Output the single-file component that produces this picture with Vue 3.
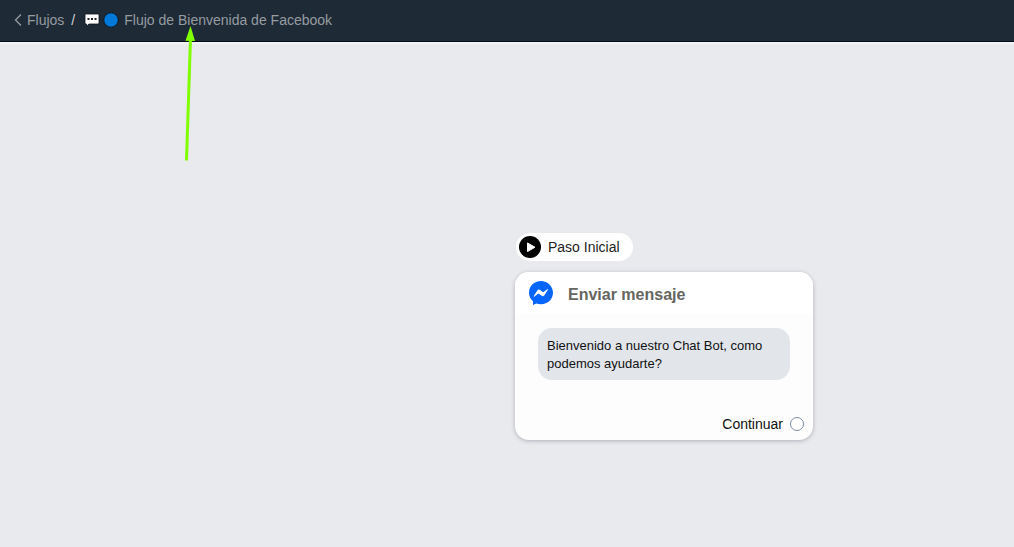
<script setup>
const flowName = 'Flujo de Bienvenida de Facebook'
const step = {
  label: 'Paso Inicial',
  title: 'Enviar mensaje',
  message: 'Bienvenido a nuestro Chat Bot, como podemos ayudarte?',
  next: 'Continuar',
}
</script>

<template>
  <div class="page">
    <header class="topbar">
      <nav class="crumbs" aria-label="Ruta">
        <a class="back" href="#">
          <svg class="chevron" width="8" height="14" viewBox="0 0 8 14" aria-hidden="true">
            <path d="M7 1.500 1.500 7 7 12.500" fill="none" stroke="currentColor" stroke-width="1.300" />
          </svg>
          <span>Flujos</span>
        </a>
        <span class="slash">/</span>
        <svg class="bubble" width="16" height="14" viewBox="0 0 16 14" aria-hidden="true">
          <path d="M2 1h12q1 0 1 1v8q0 1-1 1H5l-2.500 2.200V11H2q-1 0-1-1V2q0-1 1-1z" fill="#fff" stroke="#0c141c" stroke-width=".8" />
          <path d="M3.500 5h2v2h-2zM7 5h2v2H7zM10.500 5h2v2h-2z" fill="#222" />
        </svg>
        <svg class="dot" width="16" height="16" viewBox="0 0 16 16" aria-hidden="true">
          <circle cx="8" cy="8" r="7.200" fill="#0078d7" stroke="#0a131c" stroke-width=".8" />
        </svg>
        <span class="current">{{ flowName }}</span>
      </nav>
    </header>

    <main class="canvas">
      <section class="node">
        <div class="start">
          <svg width="22" height="22" viewBox="0 0 22 22" aria-hidden="true">
            <circle cx="11" cy="11" r="11" fill="#000" />
            <path d="M8.500 7v8.500l7.500-4.250z" fill="#fff" stroke="#fff" stroke-linejoin="round" />
          </svg>
          <span>{{ step.label }}</span>
        </div>
        <article class="card">
          <div class="card-head">
            <svg width="24" height="24" viewBox="0 0 24 24" aria-hidden="true">
              <path d="M12 0C5.200 0 0 5 0 11.700c0 3.500 1.500 6.500 4 8.600V24l3.200-1.600c1.500.5 3.100.8 4.800.8 6.800 0 12-5 12-11.500S18.800 0 12 0z" fill="#0866ff" />
              <path d="M4.800 15.100 8.300 9.500q1.100-1.700 2.800-.5l2.600 2q.4.300.9 0l3.600-2.700q.9-.6.700.4l-3.500 5.600q-1.100 1.700-2.800.5l-2.700-2q-.4-.3-.9 0l-3.500 2.700q-.9.600-.7-.4z" fill="#fff" />
            </svg>
            <h2>{{ step.title }}</h2>
          </div>
          <div class="card-body">
            <p class="message">{{ step.message }}</p>
            <button class="next" type="button">
              <span>{{ step.next }}</span>
              <span class="port"></span>
            </button>
          </div>
        </article>
      </section>
    </main>

    <svg class="arrow" width="12" height="136" viewBox="0 0 12 136" aria-hidden="true">
      <path d="M6.500 12 2.500 134.500" stroke="#80ff00" stroke-width="3" />
      <path d="M6.500 0 11 15 1.500 14.700z" fill="#80ff00" />
    </svg>
  </div>
</template>

<style>
body {
  margin: 0;
  background: #e9eaee;
}
</style>

<style scoped>
.page {
  position: relative;
  display: flex;
  flex-direction: column;
  min-height: 100vh;
  background: #e9eaee;
  font-family: "Liberation Sans", Arial, sans-serif;
  font-size: 14px;
  line-height: 20px;
  color: #222;
}
.topbar {
  box-sizing: border-box;
  height: 42px;
  padding: 10px 14px;
  background: #1e2a35;
  border-bottom: 1px solid #050d18;
  box-shadow: 0 2px 0 #f1f2f6;
}
.crumbs {
  display: flex;
  align-items: center;
  color: #969ca1;
}
.back {
  display: flex;
  align-items: center;
  gap: 5px;
  color: inherit;
  text-decoration: none;
}
.slash {
  margin: 0 9px 0 7px;
  color: #d0d4d8;
}
.dot {
  margin: 0 5px 0 3px;
}
.canvas {
  position: relative;
  flex: 1;
}
.node {
  position: absolute;
  left: 515px;
  top: 191px;
  width: 298px;
}
.start {
  display: flex;
  align-items: center;
  gap: 7px;
  box-sizing: border-box;
  width: fit-content;
  margin-left: 1px;
  padding: 3px 13px 3px 3px;
  background: #fff;
  border-radius: 14px;
}
.card {
  margin-top: 11px;
  overflow: hidden;
  background: #fdfdfd;
  border-radius: 14px;
  box-shadow: 0 1px 4px rgba(40, 45, 60, 0.3);
}
.card-head {
  display: flex;
  align-items: center;
  gap: 15px;
  height: 42px;
  padding: 0 14px;
  background: #fff;
}
h2 {
  margin: 4px 0 0;
  font-size: 16px;
  line-height: 20px;
  color: #65665f;
}
.card-body {
  display: flex;
  flex-direction: column;
  padding: 14px 9px 6px 23px;
}
.message {
  margin: 0 14px 34px 0;
  padding: 9px 9px 7px;
  background: #e2e6eb;
  border-radius: 14px;
  font-size: 13px;
  line-height: 18px;
  color: #111;
}
.next {
  display: flex;
  align-items: center;
  align-self: flex-end;
  gap: 7px;
  padding: 0;
  border: 0;
  background: none;
  font: inherit;
  color: #111;
}
.port {
  box-sizing: border-box;
  width: 14px;
  height: 14px;
  border: 1px solid #7b8ba3;
  border-radius: 50%;
  background: #fff;
}
.arrow {
  position: absolute;
  left: 184px;
  top: 26px;
}
</style>
